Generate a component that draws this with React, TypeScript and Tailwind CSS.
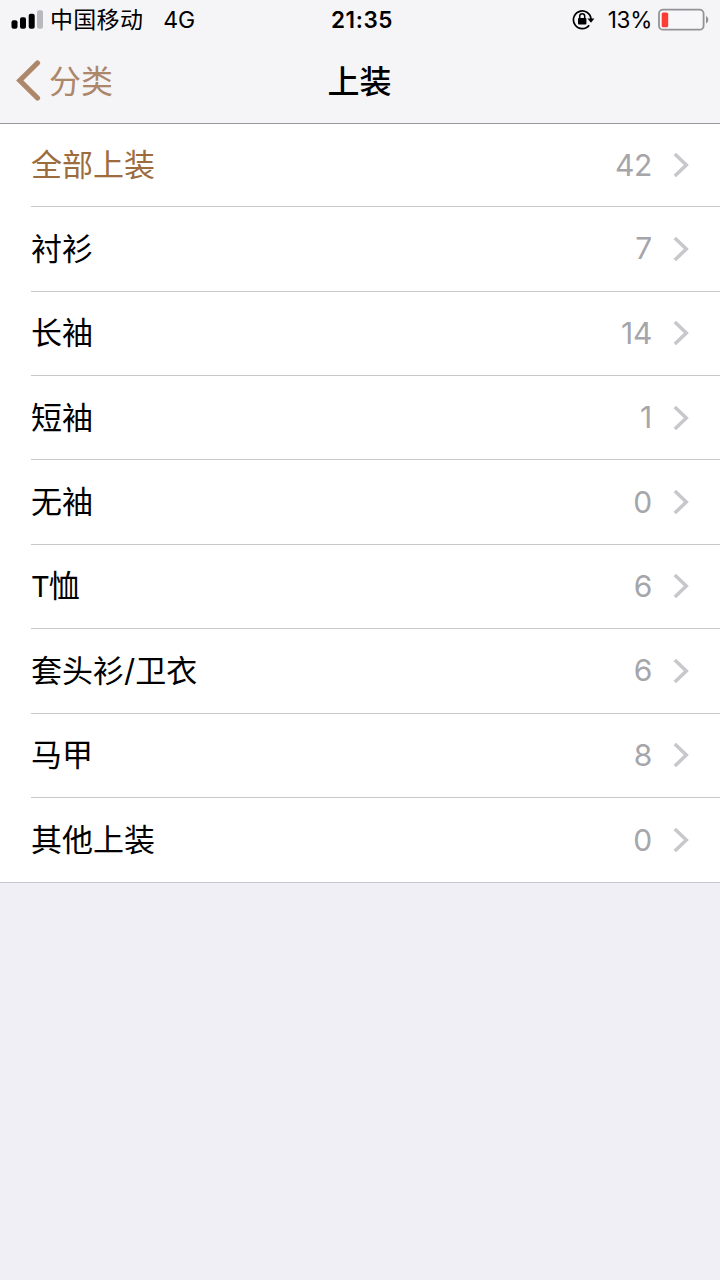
const rows = [
  { label: '全部上装', count: 42, active: true },
  { label: '衬衫', count: 7 },
  { label: '长袖', count: 14 },
  { label: '短袖', count: 1 },
  { label: '无袖', count: 0 },
  { label: 'T恤', count: 6 },
  { label: '套头衫/卫衣', count: 6 },
  { label: '马甲', count: 8 },
  { label: '其他上装', count: 0 },
];

function StatusBar() {
  return (
    <div className="grid h-10 grid-cols-[1fr_auto_1fr] items-center pl-[11px] pr-[10px] text-[22px] leading-10 text-black">
      <div className="flex items-center">
        <svg width="32" height="20" viewBox="0 0 32 20" className="shrink-0">
          <rect x="0.5" y="10.2" width="6" height="8.5" rx="2" />
          <rect x="9" y="7.2" width="6" height="11.5" rx="2" />
          <rect x="17.7" y="3.7" width="6" height="15" rx="2" />
          <rect x="26" y="0.2" width="6" height="18.5" rx="2" fill="#b9b9bd" />
        </svg>
        <span className="ml-[7px] text-[23px] tracking-[0.3px]">中国移动</span>
        <span className="ml-5 text-[23px]">4G</span>
      </div>
      <span className="pl-[3px] text-[22.5px] font-semibold tracking-[0.6px]">21:35</span>
      <div className="flex items-center justify-end">
        <svg width="23" height="22" viewBox="0 0 23 22" className="shrink-0">
          <path d="M17.2 16.2A8.8 8.8 0 1 1 19 10" fill="none" stroke="#000" strokeWidth="1.7" />
          <path d="M15.4 9.5h7L19 13.8z" />
          <rect x="6" y="9" width="8.4" height="6.4" rx="1" />
          <path d="M7.7 10V7.3a2.5 2.5 0 0 1 5 0V10" fill="none" stroke="#000" strokeWidth="1.5" />
        </svg>
        <span className="ml-[13px] text-[22.5px] tracking-[-0.3px]">13%</span>
        <svg width="52" height="24" viewBox="0 0 52 24" className="ml-[6px] shrink-0">
          <rect x="1" y="1.7" width="44.6" height="20" rx="4" fill="#f7f7f9" stroke="#939396" strokeWidth="1.8" />
          <rect x="3.7" y="4.4" width="6.5" height="14.8" rx="1.5" fill="#fc3d36" />
          <path d="M48 8c3 1.3 3 6.2 0 7.5z" fill="#939396" />
        </svg>
      </div>
    </div>
  );
}

function NavBar() {
  return (
    <div className="grid h-[82px] grid-cols-[1fr_auto_1fr] items-center pl-[15px] pr-4">
      <div className="flex items-center text-[#ad876a]">
        <svg width="26" height="42" viewBox="0 0 26 42" className="shrink-0">
          <path d="M22.5 3 4.8 20.5l17.7 17.5" fill="none" stroke="currentColor" strokeWidth="5.2" strokeLinecap="round" strokeLinejoin="miter" />
        </svg>
        <span className="ml-2 pt-[2px] text-[32px] leading-[42px]">分类</span>
      </div>
      <h1 className="pt-[2px] text-[32px] font-medium leading-[42px] text-black">上装</h1>
    </div>
  );
}

export default function App() {
  return (
    <div className="min-h-screen w-[720px] bg-[#efeff5] font-['Inter','Noto_Sans_CJK_SC',sans-serif]">
      <header className="h-[124px] border-b border-[#98989c] bg-[#f5f5f8]">
        <StatusBar />
        <NavBar />
      </header>
      <ul className="border-b border-[#c8c7cc] bg-white">
        {rows.map((row, i) => (
          <li key={row.label} className="h-[84.4px] pl-[31px] first:h-[83.2px]">
            <div className={'flex h-full items-center pr-[30px] ' + (i < rows.length - 1 ? 'border-b border-[#c8c7cc]' : '')}>
              <span className={'flex-1 text-[31px] leading-[42px] ' + (row.active ? 'text-[#9c6b3e]' : 'text-black')}>
                {row.label === 'T恤' ? <><span className="-mr-px text-[29px]">T</span>恤</> : row.label}
              </span>
              <span className="pb-px text-[30px] leading-[42px] tracking-[-0.3px] text-[#a5a5aa]">{row.count}</span>
              <svg width="17" height="26" viewBox="0 0 17 26" className="ml-[21px] shrink-0">
                <path d="M1.8 2 13.3 13 1.8 24" fill="none" stroke="#c7c7cc" strokeWidth="3.5" />
              </svg>
            </div>
          </li>
        ))}
      </ul>
    </div>
  );
}
